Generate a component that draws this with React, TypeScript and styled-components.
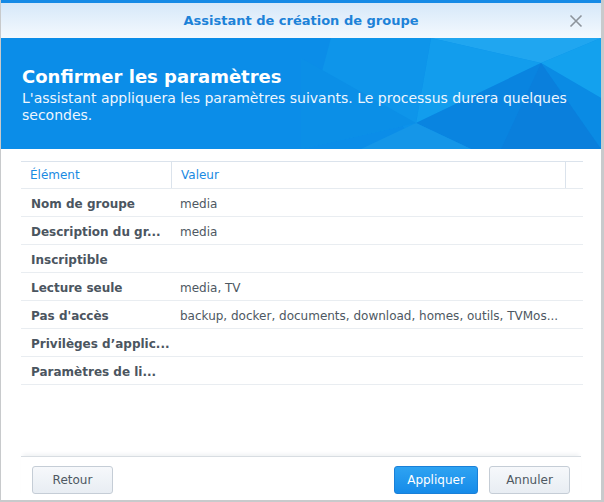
import React from "react";
import styled, { createGlobalStyle } from "styled-components";

const Global = createGlobalStyle`
  html, body { margin: 0; padding: 0; background: #cfd2d6; }
  body { font-family: "DejaVu Sans", Verdana, sans-serif; }
  * { box-sizing: border-box; }
`;

const Screen = styled.div`
  width: 604px;
  height: 502px;
  padding: 0 3px 2px 1px;
  background: #c8cacc;
`;

const Window = styled.div`
  width: 600px;
  height: 500px;
  background: #fff;
  border-top: 3px solid #168ae6;
  display: flex;
  flex-direction: column;
`;

const TitleBar = styled.div`
  height: 35px;
  flex: none;
  background: linear-gradient(#d6e8f9, #f4f9fe);
  display: flex;
  align-items: center;
  justify-content: center;
  position: relative;
`;

const Title = styled.div`
  font-size: 13px;
  font-weight: bold;
  color: #1d82d8;
`;

const Close = styled.div`
  position: absolute;
  right: 18px;
  top: 10px;
  width: 14px;
  height: 14px;
`;

const Banner = styled.div`
  height: 111px;
  flex: none;
  position: relative;
  overflow: hidden;
  background: #0a8ee9;
  padding: 28px 21px 0 21px;
  color: #fff;
`;

const BannerArt = styled.svg`
  position: absolute;
  left: 0;
  top: 0;
  width: 600px;
  height: 111px;
`;

const BannerText = styled.div`
  position: relative;
`;

const BannerTitle = styled.div`
  font-size: 18px;
  font-weight: bold;
  line-height: 22px;
`;

const BannerSub = styled.div`
  margin-top: 2px;
  font-size: 14px;
  line-height: 17px;
  color: #eef6fe;
`;

const Body = styled.div`
  flex: 1;
  padding: 12px 18px 0 20px;
`;

const Table = styled.div`
  border-top: 1px solid #dbe3ec;
`;

const HeadRow = styled.div`
  display: grid;
  grid-template-columns: 151px 394px 1fr;
  height: 27px;
  border-bottom: 1px solid #e6ebf0;
`;

const HeadCell = styled.div<{ $last?: boolean }>`
  font-size: 12px;
  color: #1a8ae2;
  padding-left: 9px;
  display: flex;
  align-items: center;
  border-right: ${(p) => (p.$last ? "none" : "1px solid #dbe3ec")};
`;

const Row = styled.div`
  display: grid;
  grid-template-columns: 151px 1fr;
  height: 28px;
  padding-top: 2px;
  border-bottom: 1px solid #e9edf1;
`;

const Label = styled.div`
  font-size: 12px;
  font-weight: bold;
  color: #4b5560;
  padding-left: 10px;
  display: flex;
  align-items: center;
  white-space: nowrap;
  overflow: hidden;
`;

const Value = styled.div`
  font-size: 12px;
  color: #4e5862;
  padding-left: 8px;
  display: flex;
  align-items: center;
  white-space: nowrap;
`;

const Footer = styled.div`
  height: 44px;
  flex: none;
  margin: 0 20px 0 20px;
  border-top: 1px solid #d8dde2;
  box-shadow: 0 -4px 4px -2px #f0f2f4;
  display: flex;
  align-items: center;
  padding: 2px 11px 0 11px;
  gap: 11px;
`;

const Spacer = styled.div`
  flex: 1;
`;

const Button = styled.button<{ $primary?: boolean }>`
  height: 28px;
  width: ${(p) => (p.$primary ? "84px" : "81px")};
  padding: 0;
  border-radius: 3px;
  font-family: "DejaVu Sans", Verdana, sans-serif;
  font-size: 12px;
  border: 1px solid ${(p) => (p.$primary ? "#1a80d8" : "#c5cdd6")};
  color: ${(p) => (p.$primary ? "#fff" : "#4e5862")};
  background: ${(p) =>
    p.$primary
      ? "linear-gradient(#2ea3f2, #168be9)"
      : "linear-gradient(#f6f8fb, #e8edf3)"};
`;

const rows: [string, string][] = [
  ["Nom de groupe", "media"],
  ["Description du gr...", "media"],
  ["Inscriptible", ""],
  ["Lecture seule", "media, TV"],
  ["Pas d'accès", "backup, docker, documents, download, homes, outils, TVMos..."],
  ["Privilèges d’applic...", ""],
  ["Paramètres de li...", ""],
];

export default function App() {
  return (
    <>
      <Global />
      <Screen>
        <Window>
          <TitleBar>
            <Title>Assistant de création de groupe</Title>
            <Close>
              <svg width="14" height="14" viewBox="0 0 14 14">
                <path d="M1.5 1.5 L12.5 12.5 M12.5 1.5 L1.5 12.5" stroke="#8d949c" strokeWidth="1.6" />
              </svg>
            </Close>
          </TitleBar>
          <Banner>
            <BannerArt viewBox="0 0 600 111" preserveAspectRatio="none">
              <rect x="0" y="0" width="600" height="111" fill="#0b8de8" />
              <polygon points="330,0 600,0 600,111 420,111" fill="#0c92ea" />
              <polygon points="430,0 540,25 600,0" fill="#20a6f0" />
              <polygon points="540,25 600,0 600,60" fill="#13a1ee" />
              <polygon points="540,25 600,111 600,60" fill="#0a8be4" />
              <polygon points="430,0 540,25 415,85" fill="#129ded" />
              <polygon points="540,25 415,85 470,111 600,111" fill="#0984e0" />
              <polygon points="540,25 500,111 600,111" fill="#0a7fdc" />
              <polygon points="415,85 360,111 470,111" fill="#1596e8" />
              <polygon points="330,0 430,0 415,85 300,111" fill="#0e95ea" />
              <polygon points="300,20 415,85 300,111" fill="#0b8fe7" />
            </BannerArt>
            <BannerText>
              <BannerTitle>Confirmer les paramètres</BannerTitle>
              <BannerSub>
                L'assistant appliquera les paramètres suivants. Le processus durera quelques
                <br />
                secondes.
              </BannerSub>
            </BannerText>
          </Banner>
          <Body>
            <Table>
              <HeadRow>
                <HeadCell>Élément</HeadCell>
                <HeadCell>Valeur</HeadCell>
                <HeadCell $last />
              </HeadRow>
              {rows.map(([l, v]) => (
                <Row key={l}>
                  <Label>{l}</Label>
                  <Value>{v}</Value>
                </Row>
              ))}
            </Table>
          </Body>
          <Footer>
            <Button>Retour</Button>
            <Spacer />
            <Button $primary>Appliquer</Button>
            <Button>Annuler</Button>
          </Footer>
        </Window>
      </Screen>
    </>
  );
}
